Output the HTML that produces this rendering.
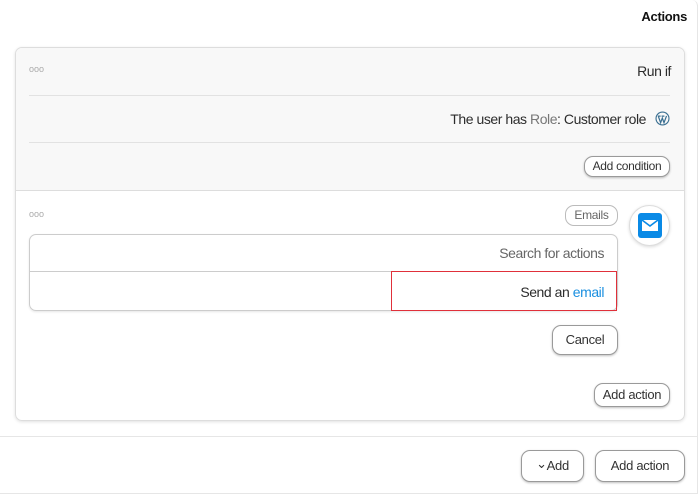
<!DOCTYPE html><html><head><style>
*{margin:0;padding:0;box-sizing:border-box}
body{width:700px;height:496px;background:#fff;font-family:"Liberation Sans",sans-serif;color:#2c2c2c;position:relative;overflow:hidden;font-size:13px;letter-spacing:-0.3px}
.a{position:absolute}
.t{letter-spacing:-0.45px}
.btn{position:absolute;border:1px solid #9a9a9a;border-radius:9px;background:#fff;box-shadow:0 1px 2px rgba(0,0,0,.25);text-align:center;color:#333}
.dots{position:absolute;font-size:9px;color:#aaa;letter-spacing:0}
</style></head><body>
<div class="a" style="left:0;top:0;width:698px;height:494px;border-right:1px solid #e6e6e6;border-bottom:1px solid #e6e6e6;border-top-right-radius:6px"></div>
<div class="a" style="right:13px;top:9px;font-weight:bold;font-size:13px;color:#111">Actions</div>
<div class="a" style="left:15px;top:47px;width:670px;height:374px;border:1px solid #ddd;border-radius:7px;box-shadow:0 1px 3px rgba(0,0,0,.12);overflow:hidden">
 <div class="a" style="left:0;top:0;width:670px;height:143px;background:#f8f8f8;border-bottom:1px solid #ddd"></div>
</div>
<div class="dots" style="left:29px;top:64px">ooo</div>
<div class="a t" style="right:29px;top:63px;font-size:14px">Run if</div>
<div class="a" style="left:29px;top:95px;width:641px;height:1px;background:#e2e2e2"></div>
<div class="a t" style="right:54px;top:111px;font-size:14px">The user has <span style="color:#777">Role</span>: Customer role</div>
<svg class="a" style="left:655px;top:111px" width="15" height="15" viewBox="0 0 16 16"><circle cx="8" cy="8" r="7.5" fill="#3a6f91"/><circle cx="8" cy="8" r="6.3" fill="#f8f8f8"/><path d="M3.5 5.5L6 12.5L7.8 7.5L9.6 12.5L12.3 5.3M3 5.5h3M7 5.5h3" stroke="#3a6f91" stroke-width="1.3" fill="none"/></svg>
<div class="a" style="left:29px;top:142px;width:641px;height:1px;background:#e2e2e2"></div>
<div class="btn" style="left:584px;top:156px;width:86px;height:21px;font-size:12px;line-height:19px">Add condition</div>
<div class="dots" style="left:29px;top:209px">ooo</div>
<div class="btn" style="left:565px;top:205px;width:53px;height:21px;font-size:12px;line-height:19px;color:#666;box-shadow:none;border-color:#bbb">Emails</div>
<div class="a" style="left:629px;top:205px;width:41px;height:41px;border-radius:50%;border:1px solid #ddd;background:#fff;box-shadow:0 1px 3px rgba(0,0,0,.15)"></div>
<svg class="a" style="left:638px;top:213px" width="24" height="25" viewBox="0 0 24 25"><rect x="0" y="0" width="24" height="25" rx="3" fill="#0a8ae6"/><rect x="4" y="7" width="16" height="11" fill="#fff"/><path d="M4 7l8 6 8-6" stroke="#0a8ae6" stroke-width="1.6" fill="none"/></svg>
<div class="a" style="left:29px;top:234px;width:589px;height:77px;border:1px solid #ccc;border-radius:7px;box-shadow:0 1px 2px rgba(0,0,0,.1)"></div>
<div class="a" style="left:29px;top:271px;width:589px;height:1px;background:#ccc"></div>
<div class="a t" style="right:96px;top:245px;font-size:14px;color:#666">Search for actions</div>
<div class="a" style="left:391px;top:271px;width:226px;height:40px;border:1px solid #e0303a"></div>
<div class="a t" style="right:96px;top:284px;font-size:14px">Send an <span style="color:#1a8fe0">email</span></div>
<div class="btn" style="left:552px;top:325px;width:66px;height:30px;font-size:13px;line-height:28px">Cancel</div>
<div class="btn" style="left:594px;top:383px;width:76px;height:24px;font-size:13px;line-height:22px">Add action</div>
<div class="a" style="left:0;top:436px;width:698px;height:1px;background:#e6e6e6"></div>
<div class="btn" style="left:521px;top:450px;width:63px;height:32px;font-size:13px;line-height:30px"><span style="position:relative;top:-2px">&#8964;</span>Add</div>
<div class="btn" style="left:595px;top:450px;width:90px;height:32px;font-size:13px;line-height:30px">Add action</div>
</body></html>
